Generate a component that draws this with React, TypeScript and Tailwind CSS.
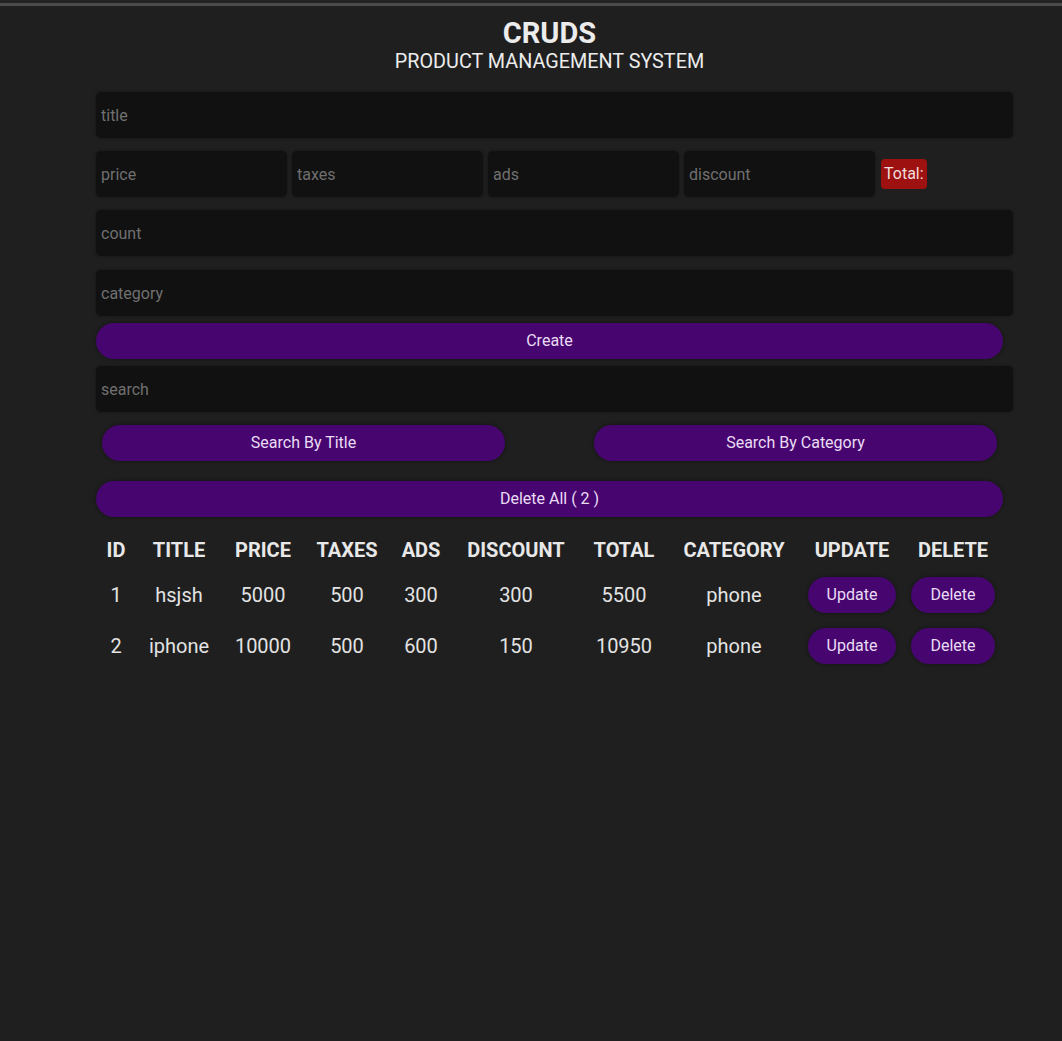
import React from 'react';

type Product = {
  id: number;
  title: string;
  price: number;
  taxes: number;
  ads: number;
  discount: number;
  total: number;
  category: string;
};

const products: Product[] = [
  { id: 1, title: 'hsjsh', price: 5000, taxes: 500, ads: 300, discount: 300, total: 5500, category: 'phone' },
  { id: 2, title: 'iphone', price: 10000, taxes: 500, ads: 600, discount: 150, total: 10950, category: 'phone' },
];

const inputCls =
  'h-[46px] bg-[#111111] rounded-[5px] px-[5px] text-[16px] text-[#e5e5e5] placeholder:text-[#707070] outline-none shadow-[0_0_3px_rgba(0,0,0,0.4)]';

const btnCls =
  'h-[36px] rounded-full bg-[#47066f] text-[#eadcf6] text-[16px] shadow-[0_0_4px_rgba(0,0,0,0.4)]';

const headers = ['ID', 'TITLE', 'PRICE', 'TAXES', 'ADS', 'DISCOUNT', 'TOTAL', 'CATEGORY', 'UPDATE', 'DELETE'];

export default function App() {
  return (
    <div className="min-h-[1041px] bg-[#1f1f1f] font-['Roboto',sans-serif] text-[#e6e6e6]">
      <div className="h-[3px] bg-[#232323]" />
      <div className="h-[3px] bg-[#4b4b4b]" />

      <div className="ml-[96px] w-[907px] pt-[10px]">
        <h1 className="text-center text-[29px] font-bold leading-[34px] text-[#ececec]">CRUDS</h1>
        <h2 className="text-center text-[19.8px] leading-[24px] text-[#ececec]">PRODUCT MANAGEMENT SYSTEM</h2>

        <div className="mt-[18px] flex flex-col">
          <input className={`${inputCls} w-[917px]`} placeholder="title" />

          <div className="mt-[13px] flex items-center gap-[5px]">
            <input className={`${inputCls} w-[191px]`} placeholder="price" />
            <input className={`${inputCls} w-[191px]`} placeholder="taxes" />
            <input className={`${inputCls} w-[191px]`} placeholder="ads" />
            <input className={`${inputCls} w-[191px]`} placeholder="discount" />
            <span className="ml-[1px] rounded-[4px] bg-[#9e1111] px-[3px] py-[4px] text-[16px] leading-[22px] text-[#f1dede]">
              Total:
            </span>
          </div>

          <input className={`${inputCls} mt-[13px] w-[917px]`} placeholder="count" />
          <input className={`${inputCls} mt-[14px] w-[917px]`} placeholder="category" />

          <button className={`${btnCls} mt-[7px] w-[907px]`}>Create</button>

          <input className={`${inputCls} mt-[7px] w-[917px]`} placeholder="search" />

          <div className="mt-[13px] flex justify-between px-[6px]">
            <button className={`${btnCls} w-[403px]`}>Search By Title</button>
            <button className={`${btnCls} w-[403px]`}>Search By Category</button>
          </div>

          <button className={`${btnCls} mt-[20px] w-[907px]`}>Delete All ( 2 )</button>
        </div>

        <table className="mt-[13px] w-[906px] table-fixed border-collapse text-center">
          <colgroup>
            <col className="w-[40px]" />
            <col className="w-[86px]" />
            <col className="w-[82px]" />
            <col className="w-[86px]" />
            <col className="w-[62px]" />
            <col className="w-[128px]" />
            <col className="w-[88px]" />
            <col className="w-[132px]" />
            <col className="w-[104px]" />
            <col className="w-[98px]" />
          </colgroup>
          <thead>
            <tr className="h-[39px]">
              {headers.map((h) => (
                <th key={h} className="text-[20px] font-bold leading-[24px] text-[#e8e8e8] whitespace-nowrap">
                  {h}
                </th>
              ))}
            </tr>
          </thead>
          <tbody>
            {products.map((p) => (
              <tr key={p.id} className="h-[51px] text-[20px] text-[#e3e3e3]">
                <td>{p.id}</td>
                <td>{p.title}</td>
                <td>{p.price}</td>
                <td>{p.taxes}</td>
                <td>{p.ads}</td>
                <td>{p.discount}</td>
                <td>{p.total}</td>
                <td>{p.category}</td>
                <td>
                  <button className={`${btnCls} w-[88px]`}>Update</button>
                </td>
                <td>
                  <button className={`${btnCls} w-[84px]`}>Delete</button>
                </td>
              </tr>
            ))}
          </tbody>
        </table>
      </div>
    </div>
  );
}
